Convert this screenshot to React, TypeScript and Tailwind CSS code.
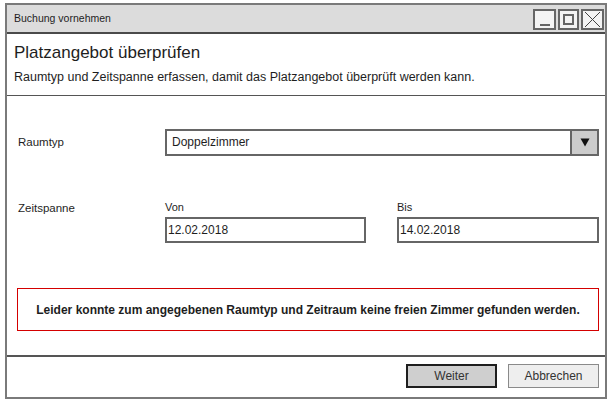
import React from "react";

const WinButton = ({ w, children }: { w: string; children: React.ReactNode }) => (
  <div className={`${w} h-[21px] border-2 border-[#666] bg-[#f4f4f4] flex items-center justify-center`}>
    {children}
  </div>
);

const App = () => {
  return (
    <div className="w-[611px] h-[403px] bg-white pl-[5px] pt-[3px] font-['Liberation_Sans',sans-serif] text-[#1e1e1e]">
      <div className="w-[602px] h-[396px] border-2 border-[#7a7a7a] flex flex-col">
        {/* title bar */}
        <div className="h-[29px] bg-[#dcdcdc] border-b-2 border-[#4a4a4a] flex items-center justify-between pl-[7px] pr-[1px]">
          <span className="text-[10.5px]">Buchung vornehmen</span>
          <div className="flex gap-[2px] mt-[1px]">
            <WinButton w="w-[23px]">
              <div className="w-[10px] h-[2px] bg-[#666] mt-[11px]" />
            </WinButton>
            <WinButton w="w-[21px]">
              <div className="w-[11px] h-[11px] border-2 border-[#666]" />
            </WinButton>
            <WinButton w="w-[23px]">
              <svg width="17" height="17" viewBox="0 0 17 17">
                <path d="M1 1 L16 16 M16 1 L1 16" stroke="#444" strokeWidth="1" fill="none" />
              </svg>
            </WinButton>
          </div>
        </div>

        {/* header */}
        <div className="h-[62px] border-b-[1.5px] border-[#555] pl-[7px] pt-[8px]">
          <h1 className="text-[17px] leading-[21px]">Platzangebot überprüfen</h1>
          <p className="text-[12.5px] leading-[15px] mt-[7px]">
            Raumtyp und Zeitspanne erfassen, damit das Platzangebot überprüft werden kann.
          </p>
        </div>

        {/* content */}
        <div className="flex-1 pl-[11px] pr-[6px]">
          <div className="flex items-center mt-[33px]">
            <span className="w-[147px] text-[11.5px]">Raumtyp</span>
            <div className="flex-1 h-[27px] border-2 border-[#666] flex">
              <span className="flex-1 text-[12px] pl-[5px] leading-[23px]">Doppelzimmer</span>
              <div className="w-[27px] bg-[#cccccc] border-l-2 border-[#666] flex items-center justify-center">
                <svg width="10" height="9" viewBox="0 0 10 9">
                  <path d="M0.5 0.5 L9.5 0.5 L5 8.5 Z" fill="#111" />
                </svg>
              </div>
            </div>
          </div>

          <div className="flex mt-[44px]">
            <span className="w-[147px] text-[11.5px] leading-[14px] mt-[1px]">Zeitspanne</span>
            <div className="flex gap-[31px] flex-1">
              <div className="flex flex-col w-[201px]">
                <span className="text-[11px] leading-[14px] mb-[3px]">Von</span>
                <div className="h-[26px] border-2 border-[#666] text-[12px] leading-[22px] pl-[1px]">12.02.2018</div>
              </div>
              <div className="flex flex-col flex-1">
                <span className="text-[11px] leading-[14px] mb-[3px]">Bis</span>
                <div className="h-[26px] border-2 border-[#666] text-[12px] leading-[22px] pl-[1px]">14.02.2018</div>
              </div>
            </div>
          </div>

          <div className="mt-[45px] ml-[-1px] h-[43px] border-[1.5px] border-[#d40000] flex items-center justify-center">
            <span className="text-[12px] font-bold">
              Leider konnte zum angegebenen Raumtyp und Zeitraum keine freien Zimmer gefunden werden.
            </span>
          </div>
        </div>

        {/* footer */}
        <div className="h-[42px] border-t-2 border-[#555] flex items-start justify-end gap-[11px] pr-[6px] pt-[7px]">
          <button className="w-[91px] h-[24px] bg-[#cfcfcf] border-2 border-[#1e1e1e] text-[12px] text-[#333]">
            Weiter
          </button>
          <button className="w-[91px] h-[24px] bg-[#eeeeee] border-[1.5px] border-[#8a8a8a] text-[12px] text-[#333]">
            Abbrechen
          </button>
        </div>
      </div>
    </div>
  );
};

export default App;
